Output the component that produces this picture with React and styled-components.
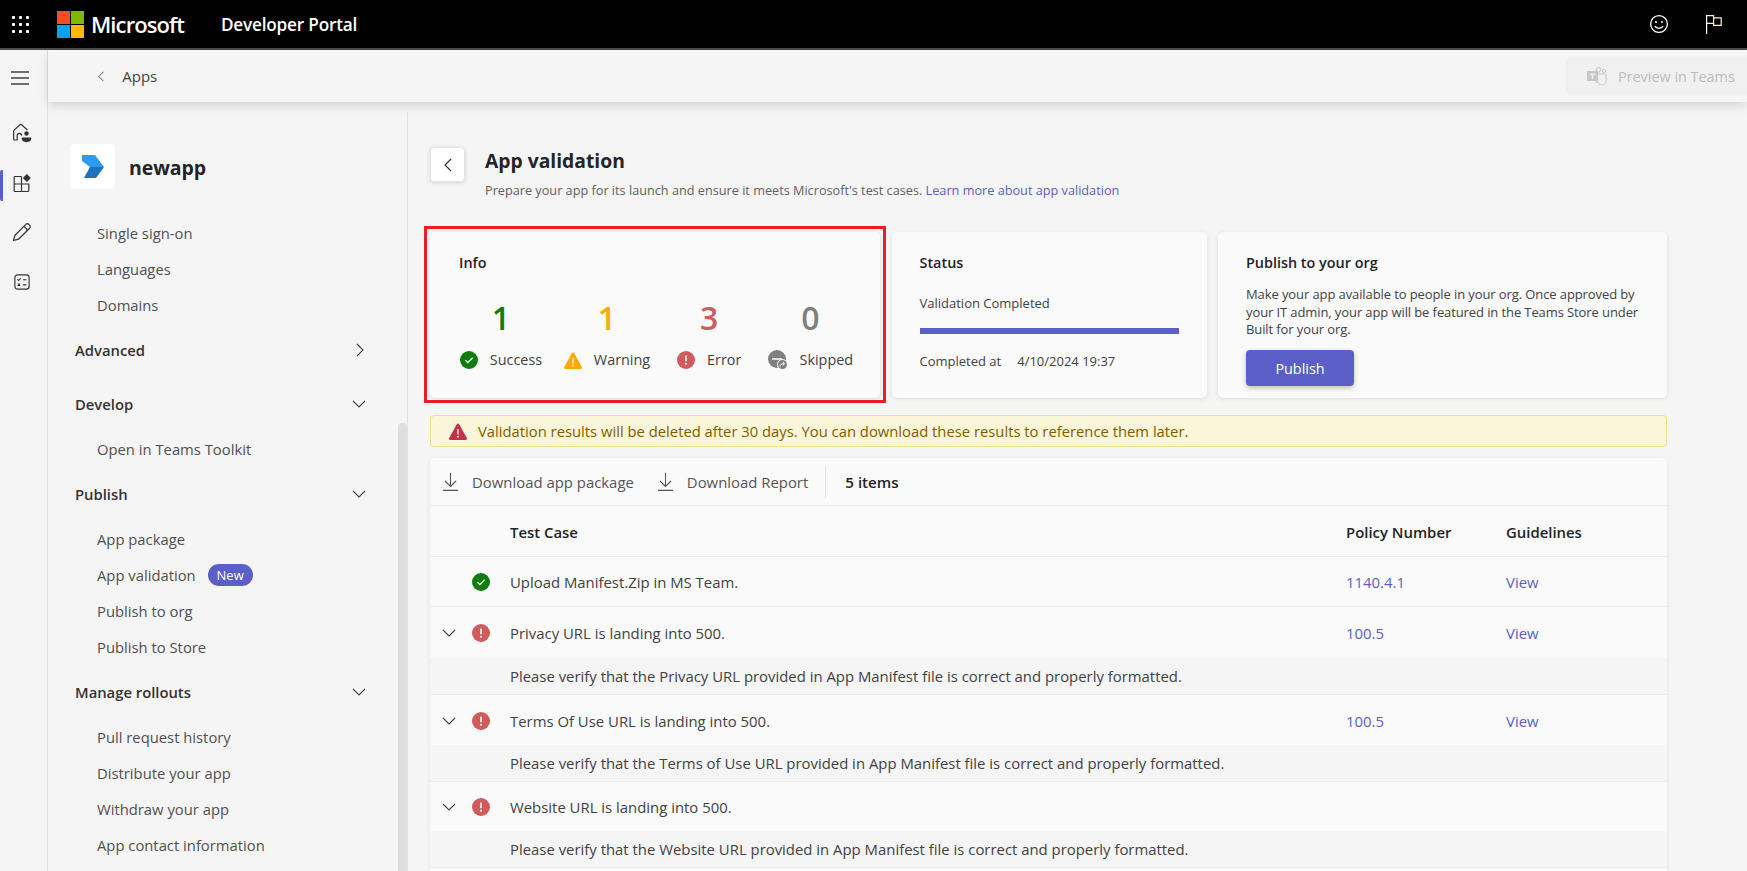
import styled, { createGlobalStyle } from "styled-components";

const GlobalStyle = createGlobalStyle`
    html, body {
        margin: 0;
        padding: 0;
        height: 100%;
        overflow: hidden;
        background: #f5f5f5;
        font-family: "Open Sans", "Noto Sans", "Liberation Sans", sans-serif;
        color: #242424;
    }
    * { box-sizing: border-box; }
`

const Page = styled.div`
    display: flex;
    flex-direction: column;
    width: 100vw;
    height: 100vh;
    overflow: hidden;
`

const TopBar = styled.header`
    display: flex;
    align-items: center;
    flex: 0 0 50px;
    padding: 0 25px 0 12px;
    background: #000;
    border-bottom: 2px solid #4d4d4d;
    color: #fff;
`

const Brand = styled.span`
    margin-left: 7px;
    font-size: 22px;
    font-weight: 600;
    letter-spacing: -0.9px;
`

const PortalName = styled.span`
    margin-left: 37px;
    font-size: 17.2px;
    font-weight: 600;
    letter-spacing: -0.2px;
`

const TopActions = styled.div`
    display: flex;
    align-items: center;
    gap: 37px;
    margin-left: auto;
`

const Body = styled.div`
    display: flex;
    flex: 1;
    min-height: 0;
`

const Rail = styled.nav`
    display: flex;
    flex-direction: column;
    flex: 0 0 48px;
    border-right: 1px solid #e0e0e0;
`

const MenuButton = styled.div`
    display: flex;
    align-items: center;
    justify-content: center;
    height: 56px;
    margin-bottom: 10px;
    padding-right: 7px;
`

const RailButton = styled.div`
    display: flex;
    align-items: center;
    justify-content: center;
    height: ${p => p.$h}px;
    margin-bottom: ${p => p.$after || 0}px;
    padding-right: 6px;
    padding-bottom: ${p => (p.$active ? 6 : 0)}px;
    border-left: 3px solid ${p => (p.$active ? "#5b5fc7" : "transparent")};
    border-radius: 2px;
    color: #424242;
`

const Content = styled.div`
    display: flex;
    flex-direction: column;
    flex: 1;
    min-width: 0;
`

const SubBar = styled.div`
    display: flex;
    align-items: center;
    justify-content: space-between;
    flex: 0 0 52px;
    padding-left: 50px;
    background: #f5f5f5;
    box-shadow: 0 4px 10px rgba(0, 0, 0, 0.13);
    position: relative;
    z-index: 2;
`

const BackLink = styled.div`
    display: flex;
    align-items: center;
    gap: 18px;
    font-size: 15px;
    color: #424242;
`

const PreviewButton = styled.div`
    display: flex;
    align-items: center;
    gap: 11px;
    width: 181px;
    height: 36px;
    padding-left: 21px;
    background: #f0f0f0;
    border-radius: 4px 0 0 4px;
    font-size: 14.4px;
    color: #bdbdbd;
    white-space: nowrap;
`

const Columns = styled.div`
    display: flex;
    flex: 1;
    min-height: 0;
`

const Sidebar = styled.aside`
    display: flex;
    flex: 0 0 360px;
    margin-top: 10px;
    border-right: 1px solid #e0e0e0;
    overflow: hidden;
`

const SideNav = styled.div`
    flex: 1;
    padding: 32px 0 0 22px;
`

const ScrollTrack = styled.div`
    flex: 0 0 9px;
    margin-top: 311px;
    background: #dedede;
    border-radius: 4px 4px 0 0;
`

const AppHead = styled.div`
    display: flex;
    align-items: center;
    gap: 14px;
    height: 45px;
    margin-bottom: 26px;
`

const AppTile = styled.div`
    display: flex;
    align-items: center;
    justify-content: center;
    width: 45px;
    height: 45px;
    background: #fff;
    border-radius: 4px;
`

const AppName = styled.div`
    padding-top: 2px;
    font-size: 19.5px;
    font-weight: 700;
    letter-spacing: -0.1px;
`

const NavItem = styled.div`
    display: flex;
    align-items: center;
    gap: 12px;
    height: ${p => p.$h || 36}px;
    padding-left: 27px;
    font-size: 14.8px;
    color: #505050;
    white-space: nowrap;
`

const NavGroup = styled.div`
    display: flex;
    align-items: center;
    justify-content: space-between;
    height: ${p => p.$h || 45}px;
    margin-left: 5px;
    padding-right: ${p => p.$pr || 32}px;
    font-size: 14.8px;
    font-weight: 600;
    color: #333;
`

const NewBadge = styled.span`
    display: inline-flex;
    align-items: center;
    justify-content: center;
    width: 45px;
    height: 22px;
    background: #5b5fc7;
    border-radius: 11px;
    font-size: 13px;
    color: #fff;
`

const Main = styled.main`
    flex: 1;
    min-width: 0;
    padding: 45px 80px 0 22px;
    overflow: hidden;
`

const PageHead = styled.div`
    display: flex;
    gap: 20px;
    height: 85px;
`

const BackButton = styled.div`
    display: flex;
    align-items: center;
    justify-content: center;
    flex: 0 0 35px;
    height: 35px;
    background: #fff;
    border: 1px solid #e4e4e4;
    border-radius: 4px;
    box-shadow: 0 1px 4px rgba(0, 0, 0, 0.14);
    color: #242424;
`

const PageTitle = styled.h1`
    margin: 0;
    height: 33px;
    font-size: 19.3px;
    line-height: 28px;
    font-weight: 700;
`

const PageSub = styled.p`
    margin: 0;
    font-size: 12.7px;
    line-height: 20px;
    color: #616161;
`

const TextLink = styled.a`
    color: #5b5fc7;
`

const Cards = styled.div`
    display: grid;
    grid-template-columns: 450px 315px 449px;
    gap: 11.5px;
    height: 166px;
`

const Card = styled.section`
    position: relative;
    padding: 21px 28px 0 ${p => p.$pl || 28}px;
    background: #fafafa;
    border-radius: 5px;
    box-shadow: 0 1px 4px rgba(0, 0, 0, 0.1);
    font-size: 13px;
    color: #424242;
`

const CardTitle = styled.h2`
    margin: 0;
    font-size: 14.4px;
    line-height: 20px;
    font-weight: 600;
    color: #242424;
`

const Highlight = styled.div`
    position: absolute;
    inset: -6px -6px -5px -6px;
    border: 3px solid #ed1c24;
    pointer-events: none;
`

const StatRow = styled.div`
    display: flex;
    margin-top: 23px;
`

const Stat = styled.div`
    display: flex;
    flex-direction: column;
    align-items: center;
    flex: 0 0 ${p => p.$w}px;
    margin-left: ${p => p.$ml}px;
`

const StatNumber = styled.div`
    font-size: 32px;
    line-height: 44px;
    font-weight: 600;
    color: ${p => p.$color};
`

const StatLabel = styled.div`
    display: flex;
    align-items: center;
    gap: 12px;
    margin-top: 10px;
    font-size: 14.4px;
    line-height: 20px;
    color: #424242;
    white-space: nowrap;
`

const StatusLine = styled.div`
    margin-top: 20px;
    line-height: 20px;
`

const ProgressBar = styled.div`
    height: 6px;
    margin-top: 15px;
    background: #5b5fc7;
`

const CompletedRow = styled.div`
    display: flex;
    gap: 16px;
    margin-top: 17px;
    line-height: 20px;
`

const PublishText = styled.p`
    margin: 13px 0 0;
    font-size: 13px;
    line-height: 17.7px;
    letter-spacing: -0.1px;
`

const PrimaryButton = styled.div`
    display: flex;
    align-items: center;
    justify-content: center;
    width: 108px;
    height: 36px;
    margin-top: 11px;
    background: #5b5fc7;
    border-radius: 4px;
    box-shadow: 0 2px 5px rgba(0, 0, 0, 0.25);
    font-size: 14.4px;
    color: #fff;
`

const Notice = styled.div`
    display: flex;
    align-items: center;
    gap: 11px;
    height: 32px;
    margin: 17px 0 11px;
    padding-left: 18px;
    background: #fbf6d9;
    border: 1px solid #f5dc86;
    border-radius: 4px;
    font-size: 14.8px;
    color: #835b00;
`

const TableCard = styled.section`
    background: #fafafa;
    border-radius: 5px 5px 0 0;
    box-shadow: 0 1px 4px rgba(0, 0, 0, 0.08);
    font-size: 14.9px;
    color: #424242;
`

const Toolbar = styled.div`
    display: flex;
    align-items: center;
    height: 48px;
    padding-left: 13px;
    border-bottom: 1px solid #ececec;
`

const ToolAction = styled.div`
    display: flex;
    align-items: center;
    gap: 14px;
    margin-right: 24px;
    color: #555;
    white-space: nowrap;
`

const ToolDivider = styled.div`
    width: 1px;
    height: 32px;
    margin: 0 19px 0 -7px;
    background: #e6e6e6;
`

const ItemCount = styled.div`
    font-size: 15.2px;
    font-weight: 600;
    color: #242424;
`

const Row = styled.div`
    display: grid;
    grid-template-columns: 38px 26px 852px 160px 1fr;
    align-items: center;
    height: ${p => p.$h}px;
    padding-top: 1px;
    border-bottom: ${p => (p.$flat ? "none" : "1px solid #ececec")};
    font-weight: ${p => (p.$head ? 600 : 400)};
    color: ${p => (p.$head ? "#242424" : "inherit")};
`

const IconCell = styled.div`
    display: flex;
    align-items: center;
    justify-content: center;
    color: #424242;
`

const CaseCell = styled.div`
    padding-left: 16px;
`

const RowLink = styled.a`
    color: #5b5fc7;
`

const DetailRow = styled.div`
    display: flex;
    align-items: center;
    height: 37px;
    padding-left: 80px;
    background: #f5f5f5;
    border-bottom: 1px solid #ececec;
`

function Waffle() {
    const dots = []
    for (let y = 0; y < 3; y++) {
        for (let x = 0; x < 3; x++) {
            dots.push(<rect key={`${x}${y}`} x={x * 7} y={y * 7} width="3" height="3" rx="0.8" fill="#fff" />)
        }
    }
    return <svg width="17" height="17" viewBox="0 0 17 17">{dots}</svg>
}

function MsLogo() {
    return (
        <svg width="27" height="27" viewBox="0 0 27 27" style={{ marginLeft: 28 }}>
            <rect width="13" height="13" fill="#f25022" />
            <rect x="14" width="13" height="13" fill="#7fba00" />
            <rect y="14" width="13" height="13" fill="#00a4ef" />
            <rect x="14" y="14" width="13" height="13" fill="#ffb900" />
        </svg>
    )
}

function SmileIcon() {
    return (
        <svg width="20" height="20" viewBox="0 0 20 20" fill="none" stroke="#fff" strokeWidth="1.3">
            <circle cx="10" cy="10" r="8.4" />
            <circle cx="7" cy="8" r="1" fill="#fff" stroke="none" />
            <circle cx="13" cy="8" r="1" fill="#fff" stroke="none" />
            <path d="M5.8 12.2c2 2.8 6.4 2.8 8.4 0" />
        </svg>
    )
}

function FlagIcon() {
    return (
        <svg width="16" height="19" viewBox="0 0 16 19" fill="none" stroke="#fff" strokeWidth="1.2">
            <path d="M.6 0v19" />
            <path d="M.6.6h7v7.8H.6" stroke="#fff3c8" />
            <path d="M7.6 2.8h7.6v7.6H7.6V8.4" stroke="#fff3c8" />
        </svg>
    )
}

function Hamburger() {
    return (
        <svg width="18" height="14" viewBox="0 0 18 14" fill="none" stroke="#424242" strokeWidth="1.4">
            <path d="M0 1h18M0 7h18M0 13h18" />
        </svg>
    )
}

function HomeIcon() {
    return (
        <svg width="20" height="20" viewBox="0 0 20 20" fill="none" stroke="#333" strokeWidth="1.2" strokeLinejoin="round">
            <path d="M1.600 16V8.200a1.500 1.500 0 0 1 .5-1.100L8 1.800a1.200 1.200 0 0 1 1.600 0L15.400 7" />
            <path d="M1.600 16a1 1 0 0 0 1 1h2.600v-4.200c0-3.200 4.400-3.200 4.400 0" />
            <circle cx="14.500" cy="10.500" r="2.200" fill="#333" stroke="none" />
            <path d="M10.500 14.600h8c.6 0 .8.400.8 1 0 2.200-2 3.600-4.800 3.600s-4.800-1.400-4.800-3.600c0-.6.300-1 .8-1z" fill="#333" stroke="none" />
        </svg>
    )
}

function AppsIcon() {
    return (
        <svg width="20" height="20" viewBox="0 0 20 20" fill="none" stroke="#333" strokeWidth="1.2">
            <path d="M9.500 3.500H3.200a1 1 0 0 0-1 1v13a1 1 0 0 0 1 1h12.600a1 1 0 0 0 1-1v-6.500H2.200" />
            <path d="M9.500 3.500v15" />
            <path d="M14.800 1l4 4-4 4-4-4z" fill="#333" stroke="none" />
        </svg>
    )
}

function PencilIcon() {
    return (
        <svg width="20" height="20" viewBox="0 0 20 20" fill="none" stroke="#333" strokeWidth="1.2" strokeLinejoin="round">
            <path d="M1.500 18.500l1.300-5L13.800 2.400a2 2 0 0 1 3 0l.8.8a2 2 0 0 1 0 3L6.500 17.200z" />
            <path d="M12 4.400l3.600 3.600" />
        </svg>
    )
}

function ChecklistIcon() {
    return (
        <svg width="16" height="16" viewBox="0 0 18 18" fill="none" stroke="#333" strokeWidth="1.3">
            <rect x="1" y="1" width="16" height="16" rx="3" />
            <path d="M4 6l1.200 1.200L7.400 5M10 6.500h4M4.200 10.800l2.600 2.600M6.800 10.800l-2.600 2.600M10 12.200h4" />
        </svg>
    )
}

function Chevron({ dir = "down", size = 14, color = "#424242" }) {
    const paths = {
        down: "M1 1l6 6 6-6",
        right: "M1 1l6 6-6 6",
        left: "M7 1L1 7l6 6",
    }
    const horizontal = dir === "down"
    return (
        <svg
            width={horizontal ? size : size * 8 / 14}
            height={horizontal ? size * 8 / 14 : size}
            viewBox={horizontal ? "0 0 14 8" : "0 0 8 14"}
            fill="none"
            stroke={color}
            strokeWidth="1.1"
        >
            <path d={paths[dir]} />
        </svg>
    )
}

function TeamsIcon() {
    return (
        <svg width="20" height="18" viewBox="0 0 20 18" fill="#c8c8c8">
            <circle cx="11.500" cy="2.800" r="2.300" fill="none" stroke="#c8c8c8" strokeWidth="1" />
            <circle cx="17" cy="3.800" r="1.700" fill="none" stroke="#c8c8c8" strokeWidth="1" />
            <path d="M9 7h10v6a4 4 0 0 1-8 2H9z" fill="none" stroke="#c8c8c8" strokeWidth="1" />
            <rect y="4" width="11" height="10" rx="1" />
            <path d="M2.800 6.500h5.400v1.300H6.200v4H4.800v-4h-2z" fill="#f0f0f0" />
        </svg>
    )
}

function AppLogo() {
    return (
        <svg width="22" height="23" viewBox="0 0 22 23">
            <path d="M0 0h13l9 12H8L0 6z" fill="#2b9af3" />
            <path d="M8 12h14l-8 11H2z" fill="#1a73c0" />
        </svg>
    )
}

function SuccessIcon() {
    return (
        <svg width="18" height="18" viewBox="0 0 18 18">
            <circle cx="9" cy="9" r="9" fill="#0e7c0e" />
            <path d="M5.500 9.300l2.300 2.300 4.800-4.800" fill="none" stroke="#fff" strokeWidth="1.300" />
        </svg>
    )
}

function WarningIcon() {
    return (
        <svg width="18" height="17" viewBox="0 0 18 17">
            <path d="M7.900 1a1.300 1.300 0 0 1 2.200 0l7.700 14a1.300 1.300 0 0 1-1.100 2H1.300a1.300 1.300 0 0 1-1.100-2z" fill="#ffaa00" />
            <path d="M9 6v5.500" stroke="#fff" strokeWidth="1.300" />
            <circle cx="9" cy="13.700" r="0.900" fill="#fff" />
        </svg>
    )
}

function ErrorIcon() {
    return (
        <svg width="18" height="18" viewBox="0 0 18 18">
            <circle cx="9" cy="9" r="9" fill="#cf5b5d" />
            <path d="M9 4.500v5.700" stroke="#fff" strokeWidth="1.500" />
            <circle cx="9" cy="12.800" r="1" fill="#fff" />
        </svg>
    )
}

function SkippedIcon() {
    return (
        <svg width="20" height="20" viewBox="0 0 20 20">
            <circle cx="9" cy="9" r="9" fill="#7f7f7f" />
            <path d="M4 9h10" stroke="#fafafa" strokeWidth="1.500" />
            <circle cx="14.500" cy="14.500" r="5.500" fill="#fafafa" />
            <circle cx="14.500" cy="14.500" r="4.500" fill="#7f7f7f" />
            <path d="M12 16.500c.2-2 1.500-3 4-2.700M15 11.900l1.700 1.800-1.800 1.600" fill="none" stroke="#fff" strokeWidth="1" />
        </svg>
    )
}

function WarnFilled() {
    return (
        <svg width="18" height="17" viewBox="0 0 18 17">
            <path d="M7.900 1a1.300 1.300 0 0 1 2.200 0l7.700 14a1.300 1.300 0 0 1-1.100 2H1.300a1.300 1.300 0 0 1-1.100-2z" fill="#c4314b" />
            <path d="M9 6v5.500" stroke="#fff" strokeWidth="1.300" />
            <circle cx="9" cy="13.700" r="0.900" fill="#fff" />
        </svg>
    )
}

function DownloadIcon() {
    return (
        <svg width="15" height="18" viewBox="0 0 15 18" fill="none" stroke="#555" strokeWidth="1.1">
            <path d="M7.500 0v13M2 8l5.500 5.500L13 8M0 17.400h15" />
        </svg>
    )
}

const stats = [
    { value: 1, color: "#0e7c0e", label: "Success", Icon: SuccessIcon, w: 84, ml: 0 },
    { value: 1, color: "#ffaa00", label: "Warning", Icon: WarningIcon, w: 88, ml: 20 },
    { value: 3, color: "#cf5b5d", label: "Error", Icon: ErrorIcon, w: 63, ml: 26 },
    { value: 0, color: "#7f7f7f", label: "Skipped", Icon: SkippedIcon, w: 86, ml: 26 },
]

const results = [
    { title: "Privacy URL is landing into 500.", detail: "Please verify that the Privacy URL provided in App Manifest file is correct and properly formatted.", policy: "100.5", view: "View", h: 51 },
    { title: "Terms Of Use URL is landing into 500.", detail: "Please verify that the Terms of Use URL provided in App Manifest file is correct and properly formatted.", policy: "100.5", view: "View", h: 50 },
    { title: "Website URL is landing into 500.", detail: "Please verify that the Website URL provided in App Manifest file is correct and properly formatted.", h: 49 },
]

export default function App() {
    return (
        <Page>
            <GlobalStyle />
            <TopBar>
                <Waffle />
                <MsLogo />
                <Brand>Microsoft</Brand>
                <PortalName>Developer Portal</PortalName>
                <TopActions>
                    <SmileIcon />
                    <FlagIcon />
                </TopActions>
            </TopBar>
            <Body>
                <Rail>
                    <MenuButton><Hamburger /></MenuButton>
                    <RailButton $h={34} $after={20}><HomeIcon /></RailButton>
                    <RailButton $h={31} $active><AppsIcon /></RailButton>
                    <RailButton $h={62}><PencilIcon /></RailButton>
                    <RailButton $h={38}><ChecklistIcon /></RailButton>
                </Rail>
                <Content>
                    <SubBar>
                        <BackLink>
                            <Chevron dir="left" size={11} />
                            Apps
                        </BackLink>
                        <PreviewButton>
                            <TeamsIcon />
                            Preview in Teams
                        </PreviewButton>
                    </SubBar>
                    <Columns>
                        <Sidebar>
                            <SideNav>
                                <AppHead>
                                    <AppTile><AppLogo /></AppTile>
                                    <AppName>newapp</AppName>
                                </AppHead>
                                <NavItem>Single sign-on</NavItem>
                                <NavItem>Languages</NavItem>
                                <NavItem>Domains</NavItem>
                                <NavGroup $h={54} $pr={34}>Advanced<Chevron dir="right" /></NavGroup>
                                <NavGroup $h={54}>Develop<Chevron /></NavGroup>
                                <NavItem $h={36}>Open in Teams Toolkit</NavItem>
                                <NavGroup $h={54}>Publish<Chevron /></NavGroup>
                                <NavItem>App package</NavItem>
                                <NavItem>App validation<NewBadge>New</NewBadge></NavItem>
                                <NavItem>Publish to org</NavItem>
                                <NavItem>Publish to Store</NavItem>
                                <NavGroup $h={54}>Manage rollouts<Chevron /></NavGroup>
                                <NavItem>Pull request history</NavItem>
                                <NavItem>Distribute your app</NavItem>
                                <NavItem>Withdraw your app</NavItem>
                                <NavItem>App contact information</NavItem>
                            </SideNav>
                            <ScrollTrack />
                        </Sidebar>
                        <Main>
                            <PageHead>
                                <BackButton><Chevron dir="left" size={14} color="#242424" /></BackButton>
                                <div>
                                    <PageTitle>App validation</PageTitle>
                                    <PageSub>
                                        Prepare your app for its launch and ensure it meets Microsoft's test cases.{" "}
                                        <TextLink>Learn more about app validation</TextLink>
                                    </PageSub>
                                </div>
                            </PageHead>
                            <Cards>
                                <Card $pl={29}>
                                    <Highlight />
                                    <CardTitle>Info</CardTitle>
                                    <StatRow>
                                        {stats.map(({ value, color, label, Icon, w, ml }) => (
                                            <Stat key={label} $w={w} $ml={ml}>
                                                <StatNumber $color={color}>{value}</StatNumber>
                                                <StatLabel><Icon />{label}</StatLabel>
                                            </Stat>
                                        ))}
                                    </StatRow>
                                </Card>
                                <Card>
                                    <CardTitle>Status</CardTitle>
                                    <StatusLine>Validation Completed</StatusLine>
                                    <ProgressBar />
                                    <CompletedRow>
                                        <span>Completed at</span>
                                        <span>4/10/2024 19:37</span>
                                    </CompletedRow>
                                </Card>
                                <Card>
                                    <CardTitle>Publish to your org</CardTitle>
                                    <PublishText>
                                        Make your app available to people in your org. Once approved by your IT admin, your app will be featured in the Teams Store under Built for your org.
                                    </PublishText>
                                    <PrimaryButton>Publish</PrimaryButton>
                                </Card>
                            </Cards>
                            <Notice>
                                <WarnFilled />
                                Validation results will be deleted after 30 days. You can download these results to reference them later.
                            </Notice>
                            <TableCard>
                                <Toolbar>
                                    <ToolAction><DownloadIcon />Download app package</ToolAction>
                                    <ToolAction><DownloadIcon />Download Report</ToolAction>
                                    <ToolDivider />
                                    <ItemCount>5 items</ItemCount>
                                </Toolbar>
                                <Row $h={51} $head>
                                    <div />
                                    <div />
                                    <CaseCell>Test Case</CaseCell>
                                    <div>Policy Number</div>
                                    <div>Guidelines</div>
                                </Row>
                                <Row $h={50}>
                                    <div />
                                    <IconCell><SuccessIcon /></IconCell>
                                    <CaseCell>Upload Manifest.Zip in MS Team.</CaseCell>
                                    <RowLink>1140.4.1</RowLink>
                                    <RowLink>View</RowLink>
                                </Row>
                                {results.map(r => (
                                    <div key={r.title}>
                                        <Row $h={r.h} $flat>
                                            <IconCell><Chevron /></IconCell>
                                            <IconCell><ErrorIcon /></IconCell>
                                            <CaseCell>{r.title}</CaseCell>
                                            <RowLink>{r.policy}</RowLink>
                                            <RowLink>{r.view}</RowLink>
                                        </Row>
                                        <DetailRow>{r.detail}</DetailRow>
                                    </div>
                                ))}
                                <Row $h={50} $flat />
                            </TableCard>
                        </Main>
                    </Columns>
                </Content>
            </Body>
        </Page>
    )
}
